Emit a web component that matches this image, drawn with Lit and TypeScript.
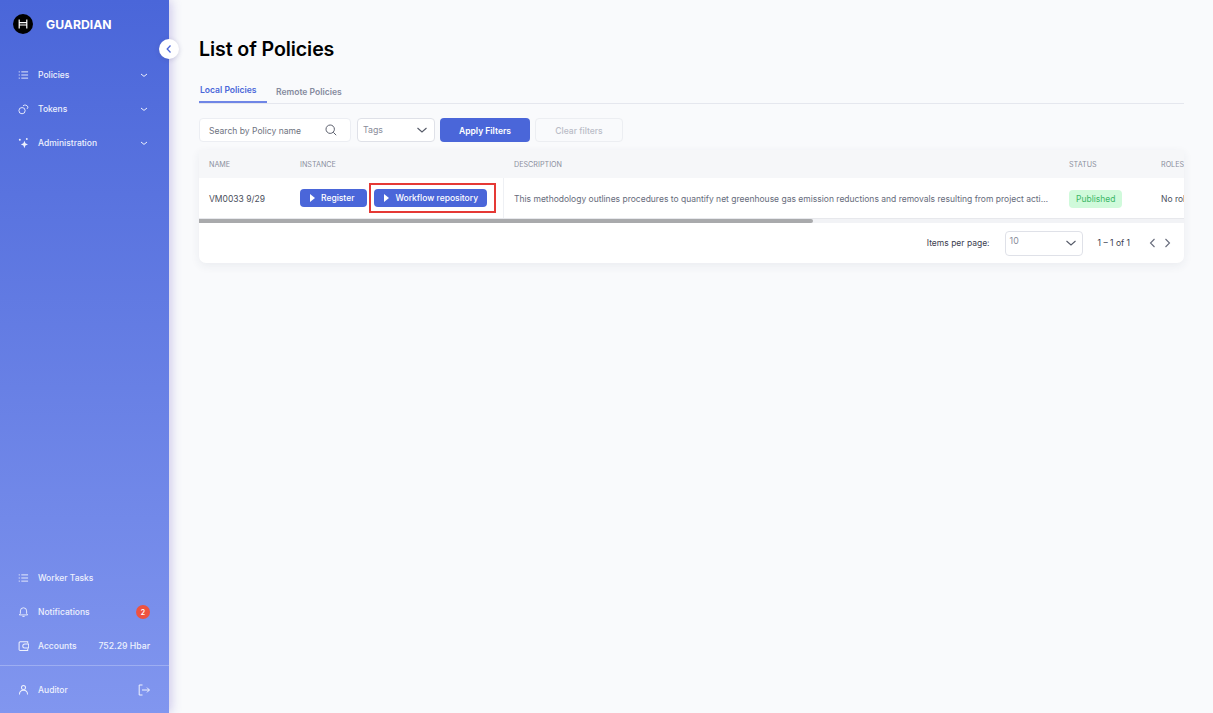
import { LitElement, html, css, svg } from "lit";
import { customElement } from "lit/decorators.js";

const chevron = svg`<path d="M1 1 4 3.4 7 1" fill="none" stroke="currentColor" stroke-width="1"/>`;
const listIcon = svg`<g fill="none" stroke="currentColor" stroke-width="1"><path d="M3.6 2.6h7.4M3.6 6h7.4M3.6 9.4h7.4"/><path d="M.8 2.6h1.2M.8 6h1.2M.8 9.4h1.2"/></g>`;
const tokenIcon = svg`<g fill="none" stroke="currentColor" stroke-width="1"><circle cx="4.4" cy="7.8" r="3.4"/><path d="M5.4 2.6A3.4 3.4 0 0 1 10.9 3.9 3.4 3.4 0 0 1 9.6 6"/></g>`;
const sparkIcon = svg`<g fill="currentColor"><path d="M7 3.6 8.1 6.4 10.9 7.5 8.1 8.6 7 11.6 5.9 8.6 3.1 7.5 5.9 6.4Z"/><circle cx="2" cy="2.4" r="1.1"/><circle cx="9.6" cy="1.6" r="1"/></g>`;
const bellIcon = svg`<g fill="none" stroke="currentColor" stroke-width="1"><path d="M1.5 9.2h9L9.4 7.6V4.8a3.4 3.4 0 0 0-6.8 0v2.8Z"/><path d="M4.8 10.8h2.4"/></g>`;
const walletIcon = svg`<g fill="none" stroke="currentColor" stroke-width="1.1"><path d="M10.6 3V1.4H2.4A1.2 1.2 0 0 0 1.2 2.6v7.2a1.2 1.2 0 0 0 1.2 1.2h8.2V9"/><path d="M11.6 3.8H7.4a2.2 2.2 0 0 0 0 4.4h4.2Z"/></g>`;
const userIcon = svg`<g fill="none" stroke="currentColor" stroke-width="1.1"><circle cx="6" cy="3.4" r="2.2"/><path d="M1.6 11c0-3 1.6-4.6 4.4-4.6s4.4 1.6 4.4 4.6"/></g>`;

@customElement("app-root")
export class AppRoot extends LitElement {
  static styles = css`
    :host { display: block; font-family: Inter, "Liberation Sans", sans-serif; }
    .page { display: flex; height: 713px; width: 1213px; overflow: hidden; background: #f9fafc; }
    .side { position: relative; flex: 0 0 169px; display: flex; flex-direction: column; color: #fff;
      background: linear-gradient(180deg, #4a66d9 0%, #8196ef 100%);
      box-shadow: 2px 0 10px rgba(90, 70, 190, .28); z-index: 2; }
    .brand { display: flex; align-items: center; gap: 13px; height: 48px; padding-left: 13px; font-size: 12.2px; font-weight: 700; }
    .logo { width: 20px; height: 20px; display: block; }
    .toggle { position: absolute; left: 159px; top: 39px; width: 20px; height: 20px; border-radius: 50%; background: #fff;
      display: flex; align-items: center; justify-content: center; color: #4a66d9; box-shadow: 0 1px 5px rgba(60,60,120,.2); }
    .nav { display: flex; flex-direction: column; padding-top: 10px; }
    .item { height: 34px; display: flex; align-items: center; padding: 0 19px 0 18px; gap: 9px; font-size: 8.5px; font-weight: 500; color: #eef1fd; }
    .item svg.ic { width: 11px; height: 12px; flex: none; }
    .item .lab { flex: 1; }
    .item svg.ch { width: 8px; height: 5px; flex: none; margin-right: 2px; }
    .spacer { flex: 1; }
    .badge { width: 14px; height: 14px; border-radius: 50%; background: #ee5240; color: #fff; font-size: 7px; font-weight: 600;
      display: flex; align-items: center; justify-content: center; }
    .hbar { font-size: 8.7px; }
    .bottom { display: flex; flex-direction: column; }
    .user { border-top: 1px solid rgba(255,255,255,.25); height: 47px; margin-top: 2px; }
    .logout { width: 12px; height: 12px; flex: none; }

    main { flex: 1; min-width: 0; padding: 0 29px 0 30px; display: flex; flex-direction: column; }
    h1 { margin: 37px 0 0; height: 24px; font-size: 19.6px; line-height: 24px; font-weight: 600; color: #000; letter-spacing: -.1px; }
    .tabs { display: flex; margin-top: 18px; height: 24px; border-bottom: 1px solid #e5e7ee; }
    .tab { font-size: 8.55px; font-weight: 600; color: #858a9e; display: flex; align-items: center; height: 24px; box-sizing: border-box; white-space: nowrap; }
    .tab.on { color: #4a66d9; border-bottom: 2px solid #6f86e6; width: 68px; padding: 0 0 1px 1px; }
    .tab.off { padding: 2px 0 0 9px; }
    .filters { display: flex; gap: 6px; margin-top: 14px; height: 24px; }
    .search { width: 152px; box-sizing: border-box; background: #fff; border: 1px solid #eceef3; border-radius: 4px; display: flex; align-items: center;
      padding: 0 13px 0 9px; font-size: 8.55px; color: #6e7280; justify-content: space-between; }
    .search span { padding-top: 1px; }
    .search svg { width: 12px; height: 12px; color: #5a5e6c; }
    .tags { width: 78px; box-sizing: border-box; background: #fff; border: 1px solid #dfe1e8; border-radius: 4px; display: flex; justify-content: space-between;
      padding: 0 6px 0 5px; font-size: 8.8px; color: #8a8d9a; }
    .tags span { margin-top: 5px; }
    .tags svg, .size svg { width: 12px; height: 12px; color: #555a68; align-self: center; }
    .apply { width: 90px; margin-left: -1px; padding-top: 1px; box-sizing: border-box; border-radius: 4px; background: #4a66d9; color: #fff; font-size: 8.55px; font-weight: 600; display: flex; align-items: center; justify-content: center; }
    .clear { width: 88px; box-sizing: border-box; margin-left: -1px; padding-top: 1px; border: 1px solid #eceef2; border-radius: 4px; color: #b9bcc7; font-size: 8.55px; font-weight: 500; display: flex; align-items: center; justify-content: center; }

    .card { margin-top: 8px; border-radius: 0 0 7px 7px; overflow: hidden; background: #fff; box-shadow: 0 3px 10px rgba(40,50,90,.07); }
    .grid { display: grid; grid-template-columns: 91px 213px 556px 92px 200px; width: 1152px; }
    .head { height: 28px; background: #f6f7f9; font-size: 7.2px; color: #8b8f9e; }
    .head > div { display: flex; align-items: center; padding-left: 10px; }
    .head > div:nth-child(3) { padding-left: 11px; }
    .row { height: 40px; background: #fff; font-size: 8.5px; color: #4b4f5c; }
    .row > div { display: flex; align-items: center; padding: 1px 0 0 10px; box-sizing: border-box; min-width: 0; }
    .row > .desc { border-left: 1px solid #eef0f4; padding-right: 8px; color: #666b7b; }
    .desc span { white-space: nowrap; overflow: hidden; text-overflow: ellipsis; }
    .row > .actions { gap: 7px; padding-top: 0; }
    .btn { position: relative; height: 18px; border-radius: 4px; background: #4a66d9; color: #fff; font-size: 8.5px; font-weight: 500;
      display: flex; align-items: center; padding: 0 13px 0 10px; gap: 6px; white-space: nowrap; }
    .btn svg { width: 5px; height: 8px; }
    .btn.mark { padding-right: 9px; }
    .btn.mark::after { content: ""; position: absolute; left: -5px; right: -9px; top: -6px; bottom: -6px; border: 2px solid #e53935; pointer-events: none; }
    .pill { height: 18px; padding: 0 7px; border-radius: 4px; background: #d0fadb; color: #3cb767; display: flex; align-items: center; font-size: 8.5px; }
    .track { height: 5px; background: #f2f3f6; border-top: 1px solid #e7e8ec; box-sizing: border-box; }
    .thumb { width: 614px; height: 4px; background: #a9aaac; border-radius: 0 2px 2px 0; }
    .pager { height: 40px; display: flex; align-items: center; justify-content: flex-end; font-size: 8.5px; color: #3c4050; padding-right: 12px; }
    .size { width: 78px; height: 25px; box-sizing: border-box; margin: 0 15px; border: 1px solid #dfe1e8; border-radius: 4px; display: flex; justify-content: space-between; padding: 0 5px 0 4px; color: #8a8d9a; font-size: 8.8px; }
    .size span { margin-top: 3px; }
    .arrows { display: flex; gap: 6px; margin-left: 18px; color: #666b7b; }
    .arrows svg { width: 9px; height: 10px; }
  `;

  private navItem(icon: unknown, label: string, tail: unknown) {
    return html`<div class="item"><svg class="ic" viewBox="0 0 12 12">${icon}</svg><span class="lab">${label}</span>${tail}</div>`;
  }

  render() {
    const ch = html`<svg class="ch" viewBox="0 0 8 5">${chevron}</svg>`;
    const tri = html`<svg viewBox="0 0 5 8"><path d="M0 0 5 4 0 8Z" fill="currentColor"/></svg>`;
    return html`<div class="page">
      <aside class="side">
        <div class="brand">
          <svg class="logo" viewBox="0 0 20 20"><circle cx="10" cy="10" r="10" fill="#000"/><path d="M6.2 5.6v8.8M13.8 5.6v8.8M6.2 8.6h7.6M6.2 11h7.6" stroke="#fff" stroke-width="1.2" fill="none"/></svg>
          <span>GUARDIAN</span>
        </div>
        <div class="toggle"><svg width="10" height="10" viewBox="0 0 10 10"><path d="M6.5 1.5 3.2 5 6.5 8.5" fill="none" stroke="currentColor" stroke-width="1.3"/></svg></div>
        <nav class="nav">
          ${this.navItem(listIcon, "Policies", ch)}
          ${this.navItem(tokenIcon, "Tokens", ch)}
          ${this.navItem(sparkIcon, "Administration", ch)}
        </nav>
        <div class="spacer"></div>
        <div class="bottom">
          ${this.navItem(listIcon, "Worker Tasks", "")}
          ${this.navItem(bellIcon, "Notifications", html`<span class="badge">2</span>`)}
          ${this.navItem(walletIcon, "Accounts", html`<span class="hbar">752.29 Hbar</span>`)}
          <div class="item user">
            <svg class="ic" viewBox="0 0 12 12">${userIcon}</svg><span class="lab">Auditor</span>
            <svg class="logout" viewBox="0 0 12 12"><g fill="none" stroke="currentColor" stroke-width="1"><path d="M4.5 1H1.2v10h3.3"/><path d="M4 6h7.4M9 3.6 11.4 6 9 8.4"/></g></svg>
          </div>
        </div>
      </aside>
      <main>
        <h1>List of Policies</h1>
        <div class="tabs">
          <div class="tab on">Local Policies</div>
          <div class="tab off">Remote Policies</div>
        </div>
        <div class="filters">
          <div class="search"><span>Search by Policy name</span>
            <svg viewBox="0 0 12 12"><g fill="none" stroke="currentColor" stroke-width="1"><circle cx="5.2" cy="5.2" r="4.2"/><path d="M8.3 8.3 11.2 11.2"/></g></svg></div>
          <div class="tags"><span>Tags</span><svg viewBox="0 0 12 12"><path d="M1.5 4 6 8 10.5 4" fill="none" stroke="currentColor" stroke-width="1.1"/></svg></div>
          <div class="apply">Apply Filters</div>
          <div class="clear">Clear filters</div>
        </div>
        <div class="card">
          <div class="grid head">
            <div>NAME</div><div>INSTANCE</div><div>DESCRIPTION</div><div>STATUS</div><div>ROLES</div>
          </div>
          <div class="grid row">
            <div>VM0033 9/29</div>
            <div class="actions">
              <div class="btn">${tri}Register</div>
              <div class="btn mark">${tri}Workflow repository</div>
            </div>
            <div class="desc"><span>This methodology outlines procedures to quantify net greenhouse gas emission reductions and removals resulting from project activities that restore tidal wetlands</span></div>
            <div><div class="pill">Published</div></div>
            <div>No role</div>
          </div>
          <div class="track"><div class="thumb"></div></div>
          <div class="pager">
            <span>Items per page:</span>
            <div class="size"><span>10</span><svg viewBox="0 0 12 12"><path d="M1.5 4 6 8 10.5 4" fill="none" stroke="currentColor" stroke-width="1.1"/></svg></div>
            <span>1 – 1 of 1</span>
            <div class="arrows">
              <svg viewBox="0 0 9 10"><path d="M6.5 1 2.5 5 6.5 9" fill="none" stroke="currentColor" stroke-width="1.1"/></svg>
              <svg viewBox="0 0 9 10"><path d="M2.5 1 6.5 5 2.5 9" fill="none" stroke="currentColor" stroke-width="1.1"/></svg>
            </div>
          </div>
        </div>
      </main>
    </div>`;
  }
}
